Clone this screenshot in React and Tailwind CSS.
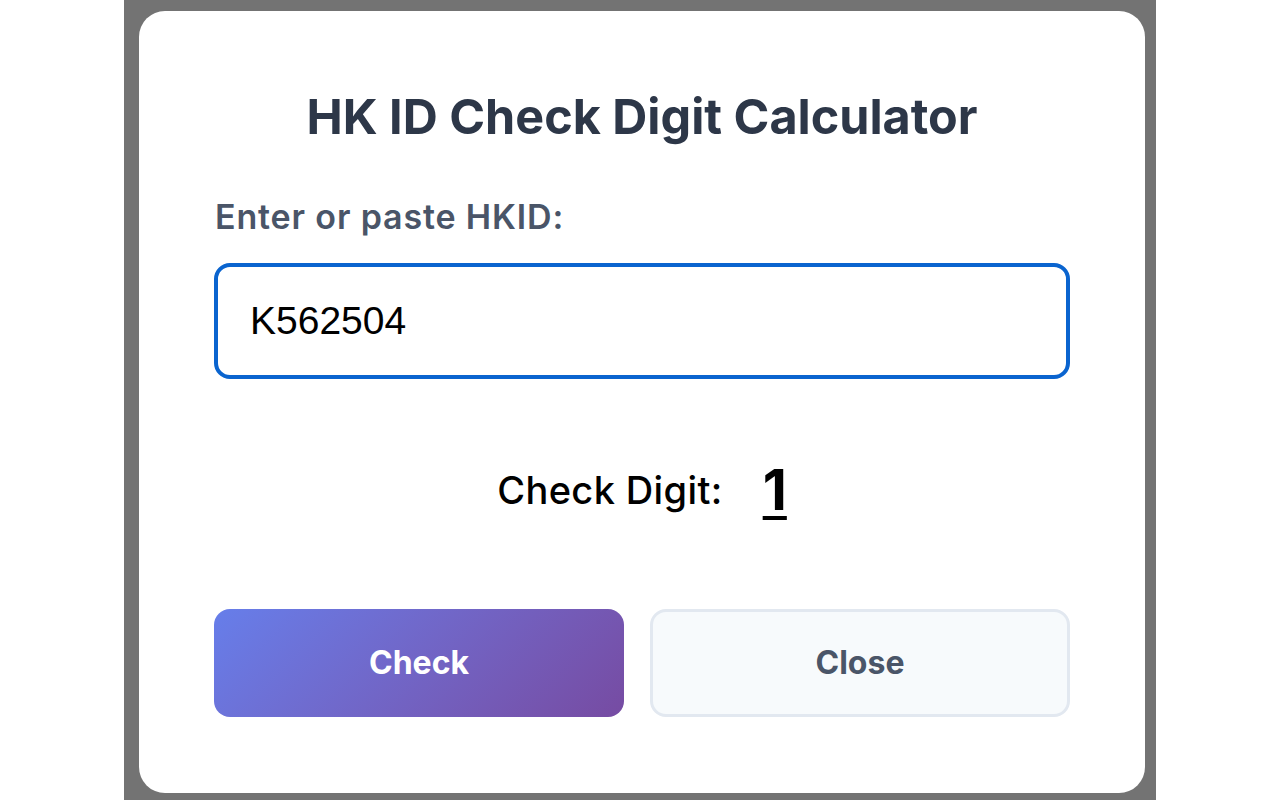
export default function App() {
  return (
    <div className="flex h-[800px] w-full justify-center bg-white">
      <div className="flex h-full w-[1032px] bg-[#737373] pl-[15px] pr-[11px] pt-[11px] pb-[7px]">
        <div className="flex w-full flex-col rounded-[26px] bg-white px-[75px] font-['Inter',sans-serif]">
          <h1 className="mt-[82px] text-center text-[48.5px] font-bold leading-none text-[#2d3748]">
            HK ID Check Digit Calculator
          </h1>
          <label className="mt-[58px] pl-px text-[34px] font-semibold leading-none tracking-[0.025em] text-[#4a5568]">
            Enter or paste HKID:
          </label>
          <input
            defaultValue="K562504"
            className="mt-[29px] h-[116px] w-full rounded-[16px] border-[4px] border-[#0a64cf] bg-white px-[32px] font-['Liberation_Sans',Arial,sans-serif] text-[39px] text-black outline-none"
          />
          <div className="mt-[77px] flex items-baseline justify-center gap-[40px]">
            <span className="text-[38px] font-medium leading-none tracking-[0.01em] text-black">Check Digit:</span>
            <span className="relative top-[6px] text-[56px] font-bold leading-none text-black underline decoration-[4px] underline-offset-[6px]">1</span>
          </div>
          <div className="mt-[97px] flex gap-[26px]">
            <button className="h-[108px] w-[410px] rounded-[16px] bg-linear-135 from-[#667eea] to-[#764ba2] text-[32px] font-bold text-white">
              Check
            </button>
            <button className="h-[108px] flex-1 rounded-[16px] border-[3px] border-[#e2e8f0] bg-[#f7fafc] text-[32px] font-bold text-[#4a5568]">
              Close
            </button>
          </div>
        </div>
      </div>
    </div>
  );
}
